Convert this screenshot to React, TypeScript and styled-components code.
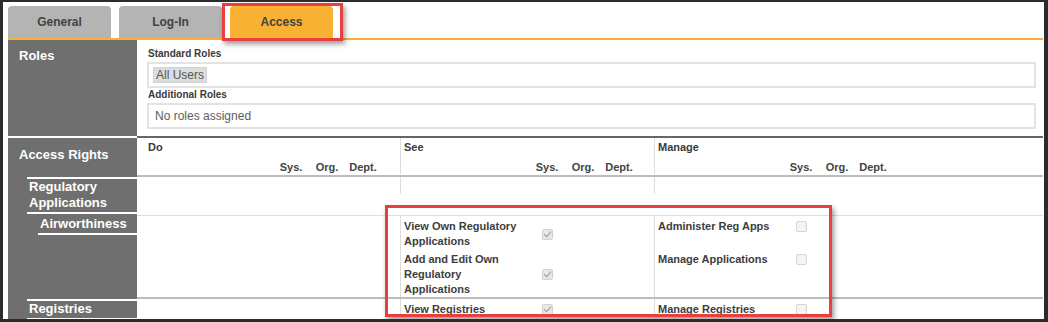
import React from "react";
import styled, { createGlobalStyle, css } from "styled-components";

const Color = {
  FRAME: "#2c2c2c",
  TAB: "#b4b4b4",
  ORANGE: "#f8b133",
  SIDE: "#6f6f6f",
  TEXT: "#3b3b3b",
  RULE_DARK: "#666666",
  RULE: "#bcbcbc",
  RULE_LIGHT: "#dddddd",
  RED: "#e8403f",
};

const GlobalStyle = createGlobalStyle`
  html, body {
    margin: 0;
    padding: 0;
    background: #ffffff;
  }
  body {
    font-family: "Liberation Sans", Arial, sans-serif;
    color: ${Color.TEXT};
  }
`;

interface Permission {
  label: string;
  checked: boolean;
}

interface PermissionRow {
  see?: Permission;
  manage?: Permission;
}

const airworthinessRows: PermissionRow[] = [
  {
    see: { label: "View Own Regulatory Applications", checked: true },
    manage: { label: "Administer Reg Apps", checked: false },
  },
  {
    see: { label: "Add and Edit Own Regulatory Applications", checked: true },
    manage: { label: "Manage Applications", checked: false },
  },
];

const registryRows: PermissionRow[] = [
  {
    see: { label: "View Registries", checked: true },
    manage: { label: "Manage Registries", checked: false },
  },
];

const CheckBox = ({ checked }: { checked: boolean }) => (
  <Box $checked={checked}>
    {checked && (
      <svg width="9" height="9" viewBox="0 0 9 9">
        <path
          d="M1.5 4.6 L3.6 6.7 L7.6 2.2"
          fill="none"
          stroke="#b3b3b3"
          strokeWidth="1.6"
          strokeLinecap="round"
          strokeLinejoin="round"
        />
      </svg>
    )}
  </Box>
);

const PermissionItem = ({ item }: { item?: Permission }) => {
  if (!item) return null;

  return (
    <ItemGrid>
      <ItemLabel>{item.label}</ItemLabel>
      <CheckCell>
        <CheckBox checked={item.checked} />
      </CheckCell>
    </ItemGrid>
  );
};

const ScopeHeader = ({ title }: { title: string }) => (
  <>
    <ColumnTitle>{title}</ColumnTitle>
    <ScopeGrid>
      <span />
      <ScopeName>Sys.</ScopeName>
      <ScopeName>Org.</ScopeName>
      <ScopeName>Dept.</ScopeName>
    </ScopeGrid>
  </>
);

const PermissionRows = ({ rows }: { rows: PermissionRow[] }) => (
  <>
    {rows.map((row, index) => (
      <SubRow key={index}>
        <Cell $first />
        <Cell>
          <PermissionItem item={row.see} />
        </Cell>
        <Cell>
          <PermissionItem item={row.manage} />
        </Cell>
      </SubRow>
    ))}
  </>
);

export default function App() {
  return (
    <>
      <GlobalStyle />
      <Frame>
        <TabBar>
          <Tab>General</Tab>
          <Tab>Log-In</Tab>
          <Tab $active>Access</Tab>
        </TabBar>

        <Panel>
          <RolesSection>
            <SideHeading>Roles</SideHeading>
            <RolesBody>
              <FieldLabel>Standard Roles</FieldLabel>
              <RoleBox>
                <RoleChip>All Users</RoleChip>
              </RoleBox>
              <FieldLabel>Additional Roles</FieldLabel>
              <RoleBox>
                <Placeholder>No roles assigned</Placeholder>
              </RoleBox>
            </RolesBody>
          </RolesSection>

          <RightsRow>
            <SideCell>
              <RightsHeading>Access Rights</RightsHeading>
            </SideCell>
            <RowBody $rule={Color.RULE} $minHeight={37}>
              <SubRow>
                <Cell $first>
                  <ScopeHeader title="Do" />
                </Cell>
                <Cell>
                  <ScopeHeader title="See" />
                </Cell>
                <Cell>
                  <ScopeHeader title="Manage" />
                </Cell>
              </SubRow>
            </RowBody>
          </RightsRow>

          <RightsRow>
            <SideCell>
              <GroupLabel $level={1} $underline>
                Regulatory Applications
              </GroupLabel>
            </SideCell>
            <RowBody $rule={Color.RULE_LIGHT} $ruleWidth={1} $minHeight={38}>
              <SubRow>
                <Cell $first $short />
                <Cell $short />
                <Cell $short />
              </SubRow>
            </RowBody>
          </RightsRow>

          <RightsRow>
            <SideCell>
              <GroupLabel $level={2} $underline>
                Airworthiness
              </GroupLabel>
            </SideCell>
            <RowBody $rule={Color.RULE}>
              <PermissionRows rows={airworthinessRows} />
            </RowBody>
          </RightsRow>

          <RightsRow>
            <SideCell>
              <GroupLabel $level={1} $underline>
                Registries
              </GroupLabel>
            </SideCell>
            <RowBody>
              <PermissionRows rows={registryRows} />
            </RowBody>
          </RightsRow>
        </Panel>

        <TabHighlight />
        <GridHighlight />
      </Frame>
    </>
  );
}

const Frame = styled.div`
  position: relative;
  box-sizing: border-box;
  width: 1048px;
  height: 322px;
  overflow: hidden;
  border-style: solid;
  border-color: ${Color.FRAME};
  border-width: 2px 4px 3px 3px;
  padding: 4px 1px 0 5px;
  background: #ffffff;
`;

const TabBar = styled.div`
  display: flex;
  gap: 8px;
  height: 32px;
`;

const Tab = styled.div<{ $active?: boolean }>`
  width: 103px;
  display: flex;
  align-items: center;
  justify-content: center;
  padding-bottom: 1px;
  box-sizing: border-box;
  border-radius: 4px 4px 0 0;
  background: ${({ $active }) => ($active ? Color.ORANGE : Color.TAB)};
  color: #424242;
  font-size: 12px;
  font-weight: bold;
`;

const Panel = styled.div`
  border-top: 2px solid ${Color.ORANGE};
`;

const RolesSection = styled.div`
  display: grid;
  grid-template-columns: 129px 1fr;
`;

const SideHeading = styled.div`
  background: ${Color.SIDE};
  color: #ffffff;
  font-size: 13px;
  font-weight: bold;
  line-height: 15px;
  padding: 8px 11px;
  border-bottom: 2px solid #ffffff;
`;

const RightsHeading = styled(SideHeading)`
  border-bottom: none;
  padding-top: 9px;
`;

const RolesBody = styled.div`
  display: flex;
  flex-direction: column;
  padding: 7px 7px 7px 10px;
  border-bottom: 2px solid ${Color.RULE_DARK};
`;

const FieldLabel = styled.div`
  font-size: 10px;
  font-weight: bold;
  line-height: 13px;
  margin-bottom: 2px;
  padding-left: 1px;
  color: #3a3a3a;
`;

const RoleBox = styled.div`
  box-sizing: border-box;
  height: 26px;
  border: 2px solid #e3e3e3;
  display: flex;
  align-items: center;
  padding-left: 4px;
`;

const RoleChip = styled.span`
  background: #dddddd;
  border: 1px solid #d2d2d2;
  color: #555555;
  font-size: 12px;
  line-height: 14px;
  padding: 0 2px;
`;

const Placeholder = styled.span`
  color: #606060;
  font-size: 12px;
  padding-left: 2px;
`;

const RightsRow = styled.div`
  display: grid;
  grid-template-columns: 129px 1fr;
`;

const SideCell = styled.div`
  background: ${Color.SIDE};
  display: flex;
  flex-direction: column;
`;

const GroupLabel = styled.div<{ $level: number; $underline?: boolean }>`
  margin-left: ${({ $level }) => ($level === 1 ? 19 : 30)}px;
  padding: 0 2px 1px;
  color: #ffffff;
  font-size: 13px;
  font-weight: bold;
  line-height: 16px;
  ${({ $level }) =>
    $level === 1 &&
    css`
      border-top: 2px solid #ffffff;
    `}
  ${({ $underline }) =>
    $underline &&
    css`
      border-bottom: 2px solid #ffffff;
    `}
`;

const RowBody = styled.div<{
  $rule?: string;
  $ruleWidth?: number;
  $minHeight?: number;
}>`
  display: flex;
  flex-direction: column;
  min-height: ${({ $minHeight }) => $minHeight ?? 0}px;
  border-bottom: ${({ $rule, $ruleWidth }) =>
    $rule ? `${$ruleWidth ?? 2}px solid ${$rule}` : "none"};
`;

const SubRow = styled.div`
  display: grid;
  grid-template-columns: 263px 254px 1fr;
`;

const Cell = styled.div<{ $first?: boolean; $short?: boolean }>`
  padding: 3px 3px 0;
  ${({ $first }) =>
    $first
      ? css`
          padding-left: 11px;
        `
      : css`
          border-left: 1px solid ${Color.RULE_LIGHT};
        `}
  ${({ $short }) =>
    $short &&
    css`
      height: 14px;
    `}
`;

const ColumnTitle = styled.div`
  font-size: 11px;
  font-weight: bold;
  line-height: 13px;
  color: #3a3a3a;
`;

const ItemGrid = styled.div`
  display: grid;
  grid-template-columns: 125px 36px 36px 36px;
  align-items: center;
`;

const ScopeGrid = styled(ItemGrid)`
  margin-top: 7px;
  line-height: 13px;
`;

const ScopeName = styled.span`
  text-align: center;
  font-size: 11px;
  font-weight: bold;
  color: #444444;
`;

const ItemLabel = styled.span`
  font-size: 11px;
  font-weight: bold;
  line-height: 15px;
  color: #3d3d3d;
`;

const CheckCell = styled.span`
  display: flex;
  justify-content: center;
`;

const Box = styled.span<{ $checked: boolean }>`
  box-sizing: border-box;
  width: 11px;
  height: 11px;
  border-radius: 2px;
  border: 1px solid ${({ $checked }) => ($checked ? "#d2d2d2" : "#d6d6d6")};
  background: ${({ $checked }) => ($checked ? "#e8e8e8" : "#f4f4f4")};
  display: flex;
  align-items: center;
  justify-content: center;
`;

const Highlight = styled.div`
  position: absolute;
  box-sizing: border-box;
  border: 3px solid ${Color.RED};
  box-shadow: 2px 3px 5px rgba(0, 0, 0, 0.4);
  pointer-events: none;
`;

const TabHighlight = styled(Highlight)`
  left: 219px;
  top: 1px;
  width: 121px;
  height: 38px;
`;

const GridHighlight = styled(Highlight)`
  left: 382px;
  top: 203px;
  width: 447px;
  height: 112px;
`;
